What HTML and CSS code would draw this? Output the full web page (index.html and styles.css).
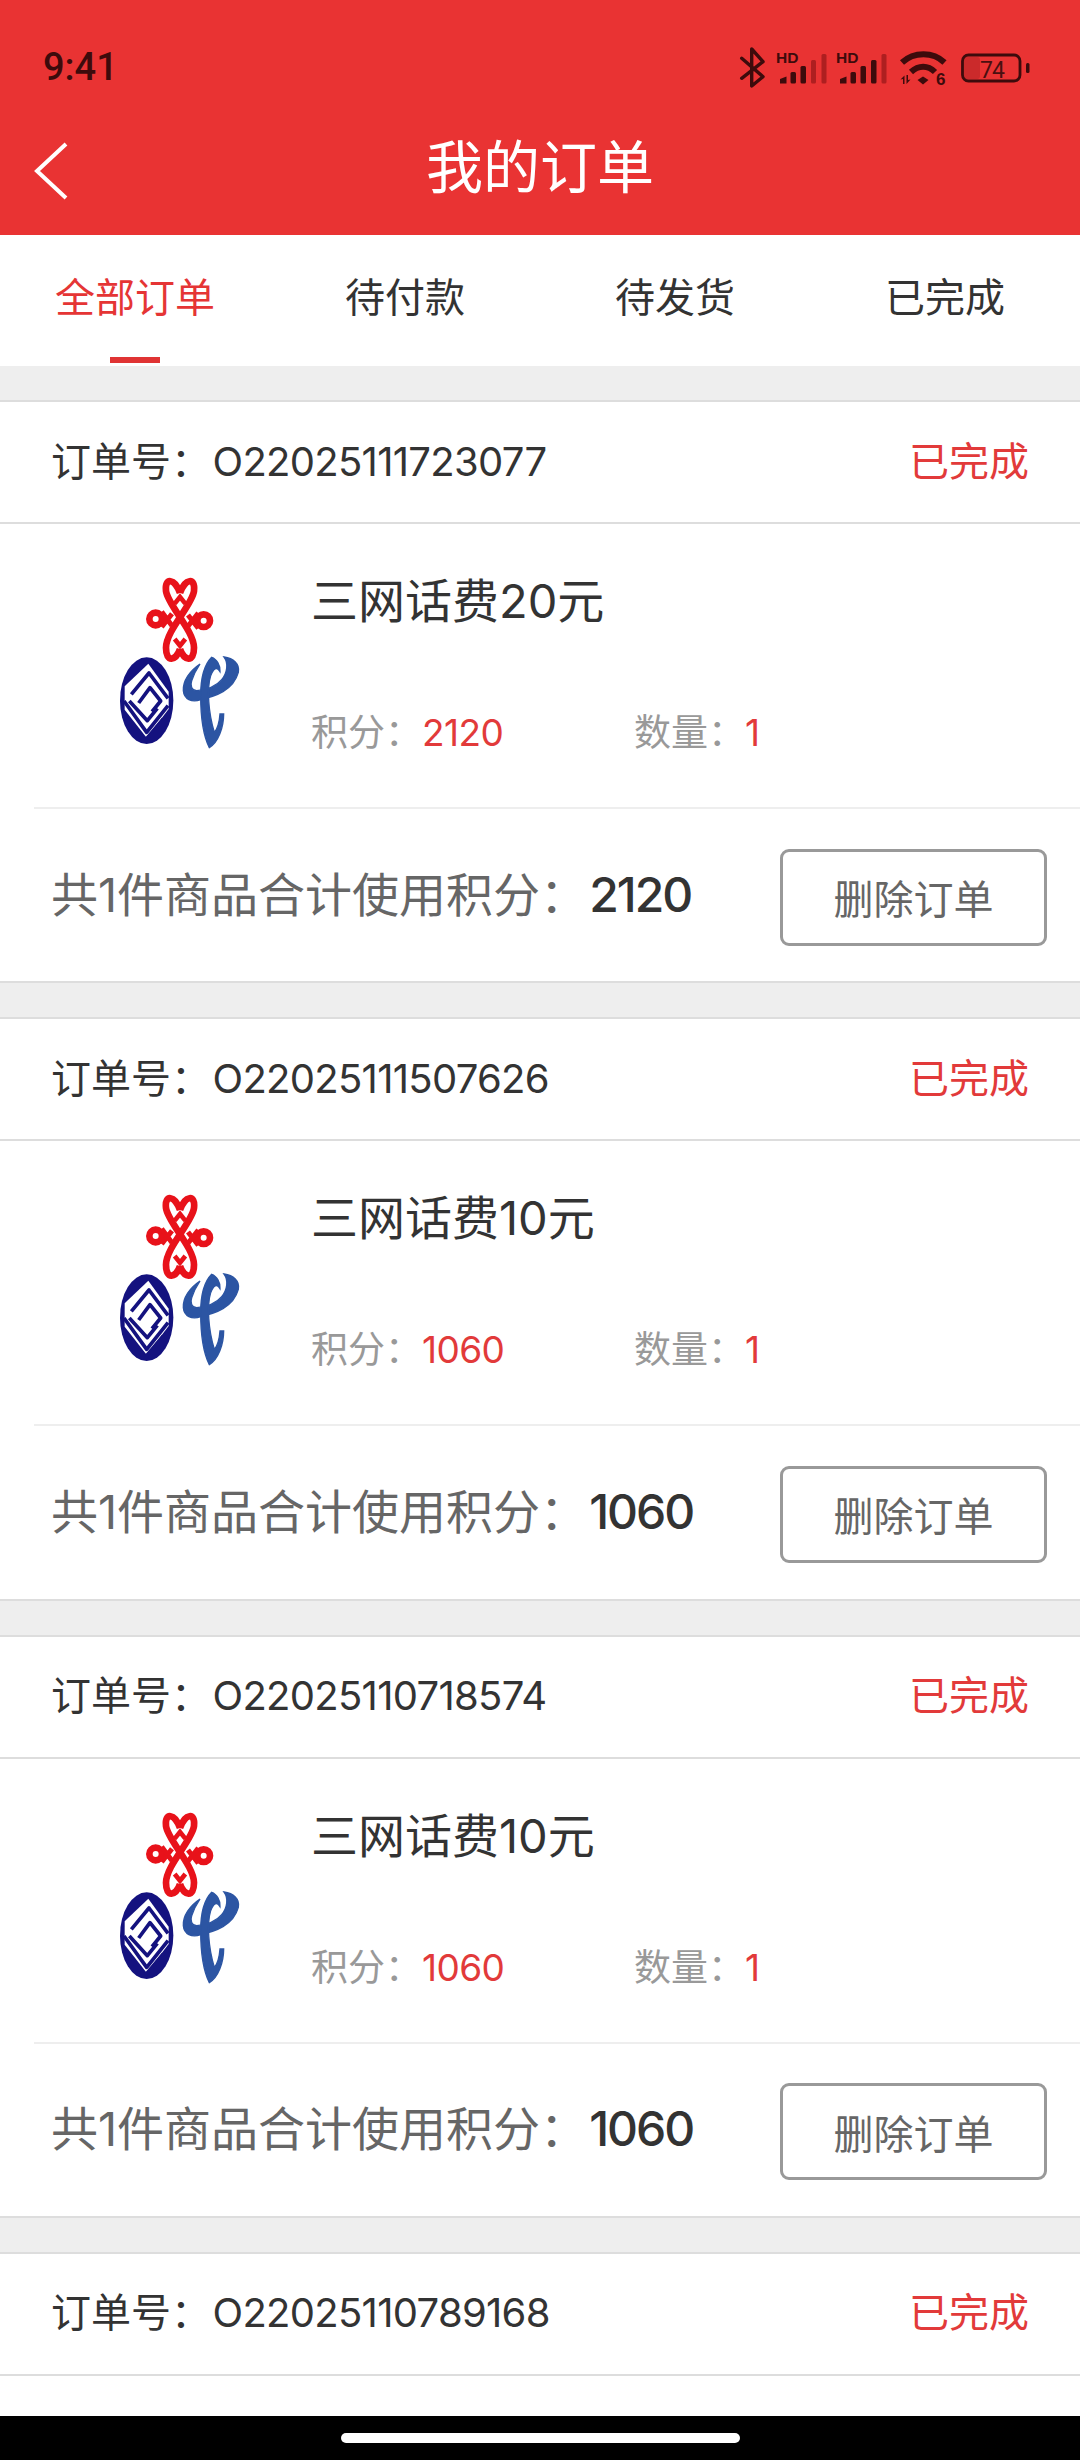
FILE: index.html
```html
<!DOCTYPE html>
<html lang="zh-CN">
<head>
<meta charset="utf-8">
<title>我的订单</title>
<link rel="stylesheet" href="styles.css">
</head>
<body>
<svg class="defs" width="0" height="0" aria-hidden="true">
  <symbol id="logo3" viewBox="0 0 420 555">
    <g fill="none" stroke="#e8121a" stroke-width="20">
      <path d="M210 72C195 28 163 24 168 66C172 106 252 185 252 236C252 282 222 276 210 240"/>
      <path d="M210 72C225 28 257 24 252 66C248 106 168 185 168 236C168 282 198 276 210 240"/>
      <circle cx="137" cy="150" r="19" stroke-width="20"/>
      <circle cx="281" cy="155" r="19" stroke-width="20"/>
      <path d="M155 128L186 170M155 174L186 134M265 132L234 172M265 178L234 138" stroke-width="15"/>
      <path d="M194 104L210 84L226 104M194 210L210 230L226 210" stroke-width="14"/>
    </g>
    <ellipse cx="110" cy="395" rx="80" ry="130" fill="#14127f"/>
    <path d="M115 284L176 368V420L110 506L44 422V352Z" fill="#fff"/>
    <g fill="none" stroke="#14127f" stroke-width="11" stroke-linejoin="round">
      <path d="M64 376L117 312L174 388"/>
      <path d="M86 402L120 356L152 396L126 428"/>
      <path d="M58 396L112 455L142 418"/>
      <path d="M42 396L110 490L174 410"/>
      <path d="M42 442L104 516L160 450"/>
    </g>
    <g transform="translate(210 240)" fill="#2c55a3" stroke="#2c55a3" stroke-width="4">
      <path d="M60 45C30 65 8 95 10 125C12 150 35 162 62 152C105 142 160 125 175 70C180 45 160 28 132 24C146 42 142 72 125 92C110 110 80 125 50 125C35 125 30 110 35 95C40 80 50 60 60 45Z"/>
      <path d="M95 25C110 30 122 50 120 68C110 50 100 60 92 80C80 120 85 190 103 250C112 240 118 220 120 195L131 195C131 235 115 280 88 296C70 260 62 200 62 140C62 90 70 50 95 25Z"/>
    </g>
  </symbol>
</svg>
<div class="page">
  <header class="appbar">
    <div class="status">
      <span class="clock">9:41</span>
      <svg class="status-icons" width="320" height="55" viewBox="730 40 320 55">
        <path class="ic-line" d="M741.7 58.3L763 76.7L751.7 86V49L763 61.7L741.7 78.3"/>
        <text class="ic-hd" x="776" y="62.5">HD</text>
        <g class="ic-fill">
          <path d="M780 83.5V79L786.5 76.5V83.5Z"/>
          <rect x="790.5" y="72" width="5.5" height="11.5" rx="1.5"/>
          <rect x="800.5" y="66" width="5.5" height="17.5" rx="1.5"/>
        </g>
        <g class="ic-dim">
          <rect x="811" y="60" width="5" height="23.5" rx="1.5"/>
          <rect x="821.5" y="54" width="5" height="29.5" rx="1.5"/>
        </g>
        <text class="ic-hd" x="836" y="62.5">HD</text>
        <g class="ic-fill">
          <path d="M840 83.5V79L846.5 76.5V83.5Z"/>
          <rect x="850.5" y="72" width="5.5" height="11.5" rx="1.5"/>
          <rect x="860.5" y="66" width="5.5" height="17.5" rx="1.5"/>
          <rect x="871" y="60" width="5.5" height="23.5" rx="1.5"/>
        </g>
        <rect class="ic-dim" x="881.5" y="54" width="5" height="29.5" rx="1.5"/>
        <path class="ic-arc" d="M902 62.5C914 51.5 933 51.5 944.5 62.5"/>
        <path class="ic-arc" d="M911 72C918.5 65 928 65 935 72"/>
        <path class="ic-fill" d="M917.5 80L923 76.5L928.5 80L923 84.5Z"/>
        <path class="ic-fill" d="M903 84V79L900.5 79.5L904.5 75.5V84ZM908 75V80L910.5 79.5L906.5 84V75Z"/>
        <text class="ic-six" x="936" y="85">6</text>
        <rect class="ic-level" x="964" y="57" width="16" height="22" rx="3"/>
        <rect class="ic-batt" x="962.5" y="55" width="57.5" height="26" rx="6"/>
        <text class="ic-pct" x="992" y="78">74</text>
        <rect class="ic-fill" x="1026" y="63" width="3.5" height="10" rx="1.5"/>
      </svg>
    </div>
    <div class="navrow">
      <svg class="back" width="36" height="58" viewBox="0 0 36 58"><path d="M33 2L4 29L33 56"/></svg>
      <h1 class="title">我的订单</h1>
    </div>
  </header>

  <nav class="tabs">
    <div class="tab active">全部订单</div>
    <div class="tab">待付款</div>
    <div class="tab">待发货</div>
    <div class="tab">已完成</div>
  </nav>

  <main class="list">
    <section class="card">
      <div class="card-head"><span class="order-no">订单号：<span class="num">O22025111723077</span></span><span class="state">已完成</span></div>
      <div class="card-body">
        <svg class="logo" width="140" height="185"><use href="#logo3"/></svg>
        <div class="info">
          <div class="name">三网话费20元</div>
          <div class="meta"><span class="meta-item">积分：<em>2120</em></span><span class="meta-item">数量：<em>1</em></span></div>
        </div>
      </div>
      <div class="card-foot"><span class="total">共1件商品合计使用积分：<b>2120</b></span><button class="del">删除订单</button></div>
    </section>
    <section class="card">
      <div class="card-head"><span class="order-no">订单号：<span class="num">O22025111507626</span></span><span class="state">已完成</span></div>
      <div class="card-body">
        <svg class="logo" width="140" height="185"><use href="#logo3"/></svg>
        <div class="info">
          <div class="name">三网话费10元</div>
          <div class="meta"><span class="meta-item">积分：<em>1060</em></span><span class="meta-item">数量：<em>1</em></span></div>
        </div>
      </div>
      <div class="card-foot"><span class="total">共1件商品合计使用积分：<b>1060</b></span><button class="del">删除订单</button></div>
    </section>
    <section class="card">
      <div class="card-head"><span class="order-no">订单号：<span class="num">O22025110718574</span></span><span class="state">已完成</span></div>
      <div class="card-body">
        <svg class="logo" width="140" height="185"><use href="#logo3"/></svg>
        <div class="info">
          <div class="name">三网话费10元</div>
          <div class="meta"><span class="meta-item">积分：<em>1060</em></span><span class="meta-item">数量：<em>1</em></span></div>
        </div>
      </div>
      <div class="card-foot"><span class="total">共1件商品合计使用积分：<b>1060</b></span><button class="del">删除订单</button></div>
    </section>
    <section class="card">
      <div class="card-head"><span class="order-no">订单号：<span class="num">O22025110789168</span></span><span class="state">已完成</span></div>
    </section>
  </main>

  <div class="homebar"><span class="handle"></span></div>
</div>
</body>
</html>
```

FILE: styles.css
```css
* { box-sizing: border-box; }
html, body { margin: 0; padding: 0; }
body {
  width: 1080px;
  height: 2460px;
  overflow: hidden;
  background: #eee;
  font-family: Inter, "Noto Sans CJK SC", sans-serif;
  color: #333;
}
.defs { position: absolute; }
.page { display: flex; flex-direction: column; height: 2460px; }

.appbar { height: 235px; background: #e93333; flex: none; }
.status {
  height: 130px;
  display: flex;
  justify-content: space-between;
  padding: 40px 30px 0 43px;
}
.clock { font-family: Roboto, sans-serif; font-size: 38px; font-weight: 500; line-height: 55px; color: #3d0b0c; height: 55px; }
.status-icons { display: block; }
.ic-line { fill: none; stroke: #3d0b0c; stroke-width: 3.4; stroke-linejoin: round; stroke-linecap: round; }
.ic-arc { fill: none; stroke: #3d0b0c; stroke-width: 6; }
.ic-fill { fill: #3d0b0c; }
.ic-dim { fill: #ae1f20; }
.ic-level { fill: #cb2a2b; }
.ic-batt { fill: none; stroke: #3d0b0c; stroke-width: 2.8; }
.ic-hd { font: 700 15.5px "Liberation Sans", sans-serif; fill: #3d0b0c; }
.ic-six { font: 700 17px "Liberation Sans", sans-serif; fill: #3d0b0c; }
.ic-pct { font: 400 23px Roboto, sans-serif; fill: #4a0f10; text-anchor: middle; letter-spacing: -1px; }

.navrow {
  position: relative;
  height: 70px;
  display: flex;
  align-items: center;
  justify-content: center;
  padding-top: 5px;
}
.back { position: absolute; left: 33px; top: 12px; fill: none; stroke: #fff; stroke-width: 4; }
.title { margin: 0; color: #fff; font-size: 57px; font-weight: 400; line-height: 70px; }

.tabs { height: 131px; display: flex; background: #fff; flex: none; }
.tab {
  position: relative;
  flex: 1;
  display: flex;
  align-items: center;
  justify-content: center;
  padding-bottom: 11px;
  font-size: 40px;
  color: #333;
}
.tab.active { color: #e53535; }
.tab.active::after {
  content: "";
  position: absolute;
  left: 110px;
  bottom: 3px;
  width: 50px;
  height: 6px;
  background: #e03434;
}

.list { flex: 1; overflow: hidden; padding-top: 34px; }
.card {
  background: #fff;
  border-top: 2px solid #ddd;
  border-bottom: 2px solid #ddd;
  height: 583.33px;
  margin-bottom: 34px;
}
.card-head {
  height: 122px;
  border-bottom: 2px solid #ddd;
  padding: 0 51px 7px 51px;
  display: flex;
  align-items: center;
  justify-content: space-between;
  font-size: 40px;
}
.num { letter-spacing: -0.7px; margin-left: 1.5px; }
.state { color: #e23a3a; }

.card-body {
  height: 285px;
  margin-left: 34px;
  border-bottom: 2px solid #eee;
  display: flex;
  padding: 45px 0 0 76px;
}
.logo { display: block; flex: none; }
.info {
  margin-left: 61px;
  padding-bottom: 49px;
  padding-top: 3px;
  display: flex;
  flex-direction: column;
  justify-content: space-between;
  flex: 1;
}
.name { font-size: 47px; line-height: 62px; color: #333; margin-top: -2px; }
.meta { display: flex; font-size: 37px; line-height: 50px; color: #999; }
.meta-item { width: 323px; }
.meta em { font-style: normal; color: #e23a3a; letter-spacing: -0.6px; }

.card-foot {
  height: 172.33px;
  padding: 0 33px 0 51px;
  display: flex;
  align-items: center;
  justify-content: space-between;
}
.total { font-size: 47px; color: #666; margin-bottom: 8px; }
.total b { font-size: 48px; font-weight: 500; color: #333; letter-spacing: -2px; margin-left: 2px; }
.del {
  width: 267px;
  height: 97px;
  background: #fff;
  border: 3px solid #999;
  border-radius: 9px;
  font-family: inherit;
  font-size: 40px;
  color: #666;
  padding: 0;
  margin-top: 4px;
}

.homebar {
  height: 44px;
  flex: none;
  background: #000;
  display: flex;
  align-items: center;
  justify-content: center;
}
.handle { display: block; width: 399px; height: 10px; border-radius: 5px; background: #fff; }
```
